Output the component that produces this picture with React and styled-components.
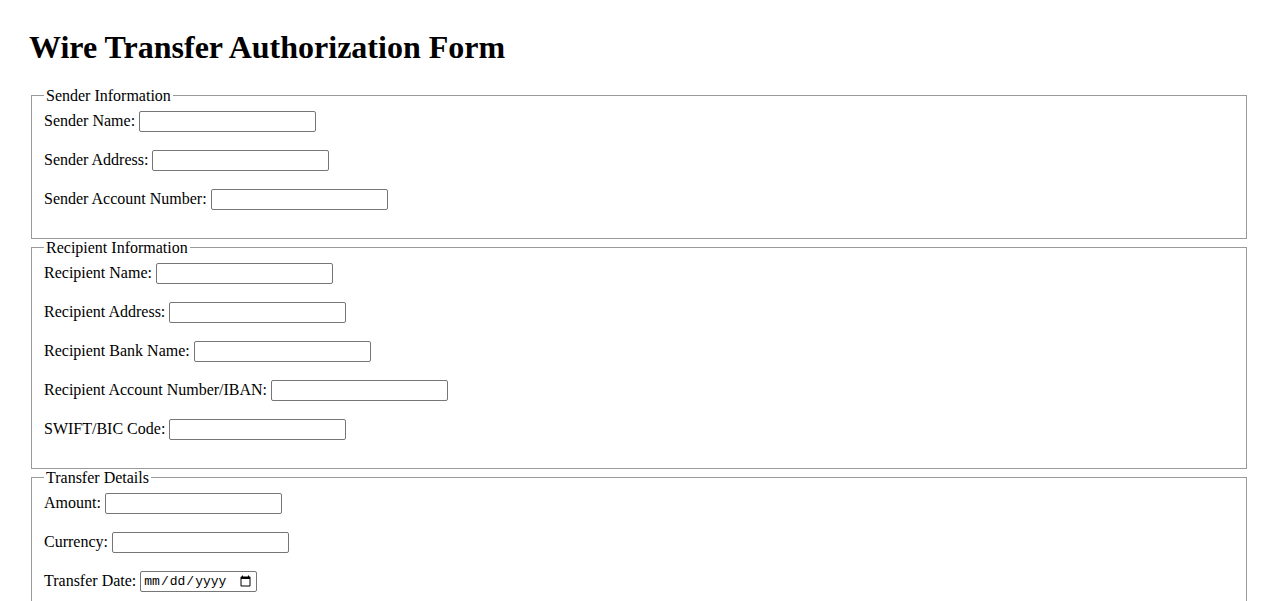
import React from 'react'
import styled, { createGlobalStyle } from 'styled-components'

const GlobalStyle = createGlobalStyle`
  body {
    margin: 0;
    background: #fff;
    color: #000;
    font-family: "Liberation Serif", "Times New Roman", serif;
    font-size: 16px;
  }
`

const Page = styled.div`
  padding: 8px 29px 0;
`

const Title = styled.h1`
  font-size: 32px;
  font-weight: bold;
  margin: 21.44px 0 20.5px;
  line-height: normal;
`

const Section = styled.fieldset`
  margin: 0 2px;
  padding: 6px 12px 10px;
  border: 1px solid #9a9a9a;
  min-width: 0;
`

const Legend = styled.legend`
  padding: 0 2px;
  font-size: 16px;
`

const Row = styled.div`
  display: flex;
  align-items: center;
  height: 21px;
  margin-bottom: 18px;
  white-space: nowrap;
`

const Label = styled.label`
  margin-right: 4px;
`

const TextInput = styled.input`
  box-sizing: border-box;
  width: ${(p) => p.$w || 177}px;
  height: 21px;
  margin: 0;
  padding: 1px 2px;
  border: 1px solid #767676;
  border-radius: 2px;
  background: #fff;
  font-family: "Liberation Mono", "DejaVu Sans Mono", monospace;
  font-size: 13px;
  color: #000;
`

const sections = [
  {
    legend: 'Sender Information',
    fields: [
      { id: 'senderName', label: 'Sender Name:' },
      { id: 'senderAddress', label: 'Sender Address:' },
      { id: 'senderAccount', label: 'Sender Account Number:' },
    ],
  },
  {
    legend: 'Recipient Information',
    fields: [
      { id: 'recipientName', label: 'Recipient Name:' },
      { id: 'recipientAddress', label: 'Recipient Address:' },
      { id: 'recipientBank', label: 'Recipient Bank Name:' },
      { id: 'recipientAccount', label: 'Recipient Account Number/IBAN:' },
      { id: 'swift', label: 'SWIFT/BIC Code:' },
    ],
  },
  {
    legend: 'Transfer Details',
    fields: [
      { id: 'amount', label: 'Amount:' },
      { id: 'currency', label: 'Currency:' },
      { id: 'transferDate', label: 'Transfer Date:', type: 'date', width: 117 },
    ],
  },
]

const App = () => {
  return (
    <Page>
      <GlobalStyle />
      <Title>Wire Transfer Authorization Form</Title>
      <form>
        {sections.map((s) => (
          <Section key={s.legend}>
            <Legend>{s.legend}</Legend>
            {s.fields.map((f) => (
              <Row key={f.id}>
                <Label htmlFor={f.id}>{f.label}</Label>
                <TextInput id={f.id} type={f.type || 'text'} $w={f.width} />
              </Row>
            ))}
          </Section>
        ))}
      </form>
    </Page>
  )
}

export default App
